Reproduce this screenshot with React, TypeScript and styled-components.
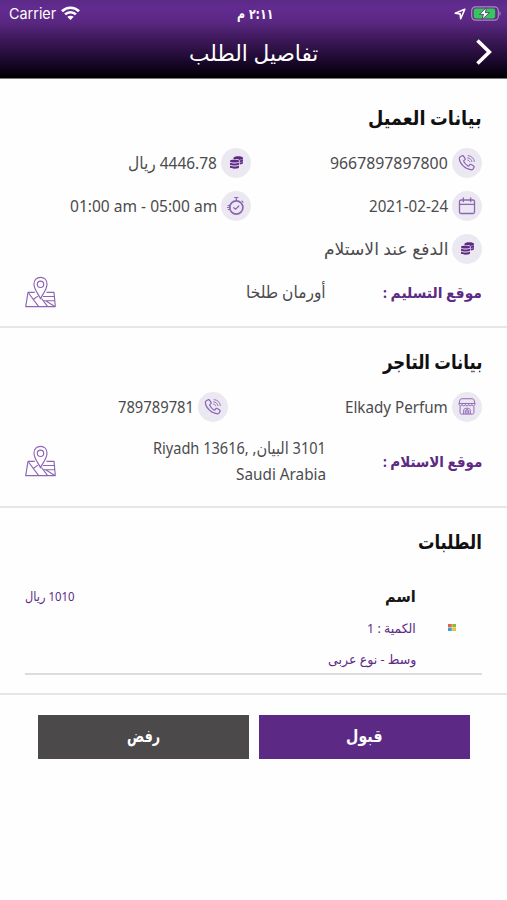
import React, { useLayoutEffect, useRef, useState } from "react";
import styled, { createGlobalStyle } from "styled-components";

const Global = createGlobalStyle`
  * { box-sizing: border-box; }
  body { margin: 0; background: #fefefe; font-family: "Noto Sans", "DejaVu Sans", sans-serif; }
`;

const Screen = styled.div`
  width: 507px;
  height: 900px;
  overflow: hidden;
  background: #fefefe;
  color: #4b4b4d;
`;

const Header = styled.header`
  height: 79px;
  background: linear-gradient(#5b2a86 0, #632b90 8px, #5a2782 22px, #3c1858 40px, #1d0930 60px, #030006 76px, #000 78px);
  border-bottom: 1px solid #777;
  color: #fff;
`;

const StatusBar = styled.div`
  display: grid;
  grid-template-columns: 1fr 36px 1fr;
  align-items: center;
  height: 27px;
  padding: 0 6px 0 9px;
`;

const StatusGroup = styled.div<{ $end?: boolean }>`
  display: flex;
  align-items: center;
  gap: 5px;
  justify-content: ${(p) => (p.$end ? "flex-end" : "flex-start")};
`;

const TitleBar = styled.div`
  display: grid;
  grid-template-columns: 28px 1fr 28px;
  align-items: center;
  justify-items: center;
  height: 50px;
  padding: 0 9px;
`;

const Section = styled.section<{ $height: number; $top: number }>`
  height: ${(p) => p.$height}px;
  padding: ${(p) => p.$top}px 25px 0;
  border-bottom: 2px solid #e6e6e8;
`;

const Heading = styled.h2<{ $gap: number }>`
  display: flex;
  align-items: center;
  height: 32px;
  margin: 0 0 ${(p) => p.$gap}px;
  color: #101010;
`;

const InfoRow = styled.div<{ $second?: number }>`
  display: grid;
  grid-template-columns: ${(p) => p.$second ?? 231}px 1fr;
  height: 43px;
  align-items: center;
`;

const Info = styled.div`
  display: flex;
  align-items: center;
  gap: 4px;
`;

const IconDisc = styled.span`
  display: grid;
  place-items: center;
  width: 30px;
  height: 30px;
  border-radius: 50%;
  background: #ece8f1;
  flex: none;
`;

const AddressRow = styled.div<{ $height: number }>`
  display: grid;
  grid-template-columns: 156px 1fr 31px;
  align-items: center;
  height: ${(p) => p.$height}px;
`;

const AddressLines = styled.div`
  display: flex;
  flex-direction: column;
  align-items: flex-start;
`;

const Order = styled.div`
  display: grid;
  grid-template-columns: 66px 1fr auto;
  height: 103px;
  border-bottom: 2px solid #dcdcde;
`;

const Thumb = styled.div`
  display: flex;
  align-items: flex-start;
  padding: 52px 26px 0 0;
`;

const OrderDetails = styled.div`
  display: flex;
  flex-direction: column;
  padding-top: 10px;
  gap: 5px;
`;

const OrderPrice = styled.div`
  padding-top: 11px;
`;

const Actions = styled.div`
  display: grid;
  grid-template-columns: 211px 211px;
  gap: 10px;
  padding: 20px 37px 0 0;
`;

const Action = styled.button<{ $color: string }>`
  display: grid;
  place-items: center;
  height: 44px;
  padding: 0 0 2px;
  border: 0;
  background: ${(p) => p.$color};
  color: #fff;
  font-family: inherit;
`;

const Slot = styled.span<{ $w: number; $lh: number }>`
  display: flex;
  justify-content: flex-start;
  width: ${(p) => p.$w}px;
  height: ${(p) => p.$lh}px;
`;

const Word = styled.span<{ $size: number; $lh: number; $bold?: number; $color?: string; $font?: string; $ltr?: boolean }>`
  flex: none;
  font-size: ${(p) => p.$size}px;
  line-height: ${(p) => p.$lh}px;
  font-weight: ${(p) => p.$bold ?? 400};
  color: ${(p) => p.$color ?? "inherit"};
  ${(p) => (p.$font ? `font-family: ${p.$font};` : "")}
  direction: ${(p) => (p.$ltr ? "ltr" : "rtl")};
  white-space: nowrap;
  transform-origin: right center;
`;

type TextProps = {
  w: number;
  size: number;
  lh?: number;
  bold?: number;
  color?: string;
  font?: string;
  ltr?: boolean;
  children: React.ReactNode;
};

/* One line of text condensed or widened to the width of its slot. */
function Text({ w, size, lh = 26, bold, color, font, ltr, children }: TextProps) {
  const ref = useRef<HTMLSpanElement>(null);
  const [scale, setScale] = useState(1);
  useLayoutEffect(() => {
    if (ref.current) setScale(w / ref.current.offsetWidth);
  }, [w]);
  return (
    <Slot $w={w} $lh={lh} dir="rtl">
      <Word ref={ref} $size={size} $lh={lh} $bold={bold} $color={color} $font={font} $ltr={ltr} style={{ transform: `scaleX(${scale})` }}>
        {children}
      </Word>
    </Slot>
  );
}

const PURPLE = "#5c2a85";
const LILAC = "#8c65b3";

const PhoneIcon = () => (
  <svg width="18" height="18" viewBox="0 0 20 20" fill="none" stroke={LILAC} strokeWidth="1.35" strokeLinejoin="round" strokeLinecap="round">
    <path d="M2.6 3.1 4.5 1.9c.6-.4 1.2-.2 1.6.4l1.7 2.5c.4.6.3 1.2-.3 1.7l-1 .8c-.3.3-.3.6-.1 1 1.1 2.1 2.7 3.8 4.7 5 .4.2.8.2 1-.1l1-1.3c.4-.5 1-.6 1.6-.2l2.7 1.7c.6.4.7.9.4 1.5l-1 1.8c-.3.6-.8.9-1.5.9C8.500 17.400 2 11 1.500 5.200c-.1-.9.300-1.600 1.100-2.100Z" />
    <path d="M10.800 4.300c2.500.2 4.200 1.800 4.700 4.200M11.200 1.800c3.800.3 6.500 2.800 7 6.500M10.700 6.700c1.300.2 2 .9 2.300 2.100" strokeWidth="1" />
  </svg>
);

const CoinsIcon = () => (
  <svg width="15" height="15" viewBox="0 0 15 15" fill={PURPLE}>
    <path d="M4.500 2.800C4.500.700 14 .700 14 2.800V8c0 .8-1.500 1.300-3.300 1.400V5.600C10.500 4.300 8 3.900 4.500 4Z" />
    <ellipse cx="5.500" cy="6" rx="4.500" ry="1.500" />
    <path d="M1 7.400c2 1.300 7 1.300 9 0v2c-1 1.500-8 1.500-9 0ZM1 10.600c2 1.300 7 1.300 9 0v1.900c-1 1.600-8 1.600-9 0Z" />
    <path d="M10.800 4.900c1.300 0 2.400-.3 3.200-.8M10.800 7.500c1.300 0 2.400-.3 3.200-.8" stroke="#cbb9da" strokeWidth=".6" />
  </svg>
);

const CalendarIcon = () => (
  <svg width="18" height="18" viewBox="0 0 18 18" fill="none" stroke={LILAC} strokeWidth="1.300" strokeLinecap="round">
    <rect x="1.500" y="3" width="15" height="13.500" rx="1.500" />
    <path d="M1.500 7.300h15M5.300 1v3.500M12.700 1v3.500" />
  </svg>
);

const TimerIcon = () => (
  <svg width="20" height="20" viewBox="0 0 20 20" fill="none" stroke={LILAC} strokeWidth="1.500" strokeLinecap="round">
    <circle cx="10.300" cy="11.500" r="6.600" strokeWidth="1.700" />
    <path d="M8.600 1.500h3.400M10.300 1.500v3M2 9.500h2.500M1.500 11.500H4M2.300 13.500h2M16 5.200l1 1M7.700 11.700l1.900 1.500 3.200-3.200" strokeWidth="1.200" />
  </svg>
);

const StoreIcon = () => (
  <svg width="18" height="19" viewBox="0 0 19 19" fill="none" stroke={LILAC} strokeWidth="1" strokeLinejoin="round">
    <path d="M4 1.300h11c1 0 1.600.4 1.900 1.300l1 3.700H1.100l1-3.700C2.400 1.700 3 1.300 4 1.300Z" />
    <path d="M1.100 6.300v1c0 2 3.300 2 3.300 0 0 2 3.400 2 3.400 0 0 2 3.400 2 3.400 0 0 2 3.400 2 3.400 0 0 2 3.300 2 3.300 0v-1M2.200 9.300V16c0 1 .5 1.500 1.500 1.500h11.600c1 0 1.500-.5 1.500-1.500V9.300M6 17.500v-4.200c0-2.700 7-2.700 7 0v4.200M7.800 17v-3.200c0-1.300 3.400-1.300 3.400 0V17M9.500 13v4.500" />
  </svg>
);

const MapIcon = () => (
  <svg width="31" height="32" viewBox="0 0 31 32" fill="none" stroke={LILAC} strokeWidth="1.150" strokeLinejoin="round">
    <path d="M9.800 16.300H3L.7 30.600h29.600L29 16.300h-7.500" />
    <path d="M15.500 22.800C13.500 18.200 9 13.500 9 8.200 9 4 11.700 1.300 15.500 1.300S22 4 22 8.200c0 5.300-4.500 10-6.500 14.600Z" />
    <circle cx="15.500" cy="8.300" r="3.200" />
    <path d="M3.500 17 13.500 30.300M8.500 23.300l4.500-3.200M16.500 22.500l6 7.800M18 20.500h11.300M18.700 24.700h11M21 25l8.500 5.200" />
  </svg>
);

const WifiIcon = () => (
  <svg width="19" height="15" viewBox="0 0 19 15" fill="none" stroke="#fff" strokeWidth="2.700">
    <path d="M1 5.200C5.700.600 13.300.600 18 5.200M4.100 8.400c3-2.900 7.800-2.900 10.800 0" />
    <path d="m9.500 14-3.200-3.200c1.800-1.500 4.600-1.500 6.400 0Z" fill="#fff" stroke="none" />
  </svg>
);

const LocationIcon = () => (
  <svg width="12" height="12" viewBox="0 0 12 12" fill="none" stroke="#fff" strokeWidth="1.600" strokeLinejoin="round">
    <path d="M10.800 1.200 1.200 5.300l4.900.6.600 4.900Z" />
  </svg>
);

const BatteryIcon = () => (
  <svg width="30" height="15" viewBox="0 0 30 15">
    <rect x=".7" y=".9" width="26.600" height="13.200" rx="3.800" fill="none" stroke="#a78dbb" strokeWidth="1.200" />
    <path d="M28.500 5.200c1.500.5 1.500 4.100 0 4.600Z" fill="#a78dbb" />
    <rect x="2.700" y="2.600" width="21.500" height="9.800" rx="1.800" fill="#34c85a" />
    <path d="M15.500 1.500 8.500 8.300h4L11 13.500l7.500-6.800h-4.200Z" fill="#fff" stroke="#4f2771" strokeWidth=".8" />
  </svg>
);

const ChevronIcon = () => (
  <svg width="18" height="28" viewBox="0 0 18 28" fill="none" stroke="#fff" strokeWidth="3.600">
    <path d="M2.500 2.500 14.300 14 2.500 25.500" />
  </svg>
);

const LogoIcon = () => (
  <svg width="8" height="7" viewBox="0 0 8 7">
    <path fill="#e8653c" d="M0 0h3.800v3.300H0z" />
    <path fill="#8dbb3f" d="M4.200 0H8v3.300H4.200z" />
    <path fill="#3a9edb" d="M0 3.700h3.800V7H0z" />
    <path fill="#f2bd35" d="M4.200 3.700H8V7H4.200z" />
  </svg>
);

type InfoItemProps = { icon: React.ReactNode; w: number; size?: number; ltr?: boolean; children: React.ReactNode };

function InfoItem({ icon, w, size = 16.5, ltr, children }: InfoItemProps) {
  return (
    <Info>
      <IconDisc>{icon}</IconDisc>
      <Text w={w} size={size} ltr={ltr}>{children}</Text>
    </Info>
  );
}

export default function App() {
  return (
    <>
      <Global />
      <Screen dir="rtl">
        <Header dir="ltr">
          <StatusBar>
            <StatusGroup>
              <Text w={47} size={15} lh={20} font="Inter, sans-serif" ltr>Carrier</Text>
              <WifiIcon />
            </StatusGroup>
            <Text w={36} size={14} lh={20} bold={700} font='"DejaVu Sans", sans-serif'>٢:١١ م</Text>
            <StatusGroup $end>
              <LocationIcon />
              <BatteryIcon />
            </StatusGroup>
          </StatusBar>
          <TitleBar>
            <span />
            <Text w={129} size={22} lh={30}>تفاصيل الطلب</Text>
            <ChevronIcon />
          </TitleBar>
        </Header>

        <Section $height={249} $top={23}>
          <Heading $gap={7}><Text w={114} size={20} lh={30} bold={700}>بيانات العميل</Text></Heading>
          <InfoRow>
            <InfoItem icon={<PhoneIcon />} w={118} ltr>9667897897800</InfoItem>
            <InfoItem icon={<CoinsIcon />} w={89}>4446.78 ريال</InfoItem>
          </InfoRow>
          <InfoRow>
            <InfoItem icon={<CalendarIcon />} w={79} ltr>2021-02-24</InfoItem>
            <InfoItem icon={<TimerIcon />} w={147} ltr>01:00 am - 05:00 am</InfoItem>
          </InfoRow>
          <InfoRow>
            <InfoItem icon={<CoinsIcon />} w={125} size={17}>الدفع عند الاستلام</InfoItem>
          </InfoRow>
          <AddressRow $height={43}>
            <Text w={99} size={15} bold={700} color={PURPLE}>موقع التسليم :</Text>
            <Text w={80} size={17}>أورمان طلخا</Text>
            <MapIcon />
          </AddressRow>
        </Section>

        <Section $height={180} $top={18}>
          <Heading $gap={7}><Text w={99} size={20} lh={30} bold={700}>بيانات التاجر</Text></Heading>
          <InfoRow $second={254}>
            <InfoItem icon={<StoreIcon />} w={103} ltr>Elkady Perfum</InfoItem>
            <InfoItem icon={<PhoneIcon />} w={76} ltr>789789781</InfoItem>
          </InfoRow>
          <AddressRow $height={65}>
            <Text w={99} size={15} bold={700} color={PURPLE}>موقع الاستلام :</Text>
            <AddressLines>
              <Text w={173} size={16.5}>3101 البيان, <bdi dir="ltr">Riyadh 13616,</bdi></Text>
              <Text w={90} size={16.5} ltr>Saudi Arabia</Text>
            </AddressLines>
            <MapIcon />
          </AddressRow>
        </Section>

        <Section $height={187} $top={18}>
          <Heading $gap={14}><Text w={64} size={20} lh={30} bold={700}>الطلبات</Text></Heading>
          <Order>
            <Thumb><LogoIcon /></Thumb>
            <OrderDetails>
              <Text w={31} size={16} lh={28} bold={700} color="#161616">اسم</Text>
              <Text w={49} size={13} color={PURPLE}>الكمية : 1</Text>
              <Text w={88} size={13} color={PURPLE}>وسط - نوع عربى</Text>
            </OrderDetails>
            <OrderPrice>
              <Text w={49} size={13} color={PURPLE}>1010 ريال</Text>
            </OrderPrice>
          </Order>
        </Section>

        <Actions>
          <Action $color={PURPLE}><Text w={36} size={17} bold={700}>قبول</Text></Action>
          <Action $color="#4b494a"><Text w={33} size={17} bold={700}>رفض</Text></Action>
        </Actions>
      </Screen>
    </>
  );
}
